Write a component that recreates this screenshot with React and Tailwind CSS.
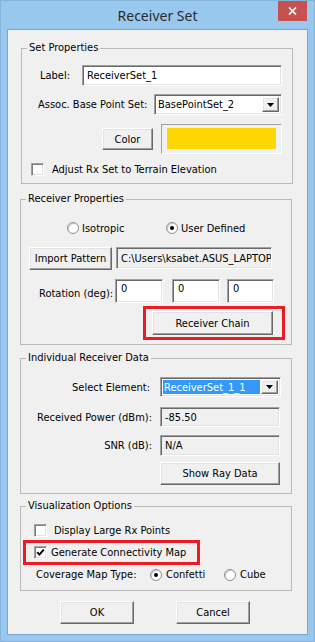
import React from "react";

function Raised({ className = "", children }) {
  return (
    <div
      className={
        "flex items-center justify-center shrink-0 bg-[#f0f0f0] border border-t-white border-l-white border-r-[#696969] border-b-[#696969] shadow-[inset_-1px_-1px_0_#a0a0a0,inset_1px_1px_0_#e3e3e3] " +
        className
      }
    >
      {children}
    </div>
  );
}

function Sunken({ className = "", children }) {
  return (
    <div
      className={
        "flex shrink-0 overflow-hidden whitespace-nowrap border border-t-[#a0a0a0] border-l-[#a0a0a0] border-r-white border-b-white shadow-[inset_1px_1px_0_#696969,inset_-1px_-1px_0_#e3e3e3] " +
        className
      }
    >
      {children}
    </div>
  );
}

function Check({ checked }) {
  return (
    <div className="w-[13px] h-[13px] shrink-0 border border-t-[#a0a0a0] border-l-[#a0a0a0] border-r-white border-b-white shadow-[inset_1px_1px_0_#808080,inset_-1px_-1px_0_#e3e3e3] bg-white flex items-center justify-center">
      {checked && (
        <svg width="9" height="9" viewBox="0 0 9 9">
          <path d="M1.2 4.2 L3.4 6.6 L7.8 1.6" stroke="#000" strokeWidth="1.9" fill="none" />
        </svg>
      )}
    </div>
  );
}

function Radio({ checked }) {
  return (
    <div className="w-[12px] h-[12px] shrink-0 rounded-full border border-[#8f8f8f] bg-white shadow-[inset_1px_1px_1px_#c8c8c8] flex items-center justify-center">
      {checked && <div className="w-[4px] h-[4px] rounded-full bg-black" />}
    </div>
  );
}

function Arrow() {
  return (
    <Raised className="w-[17px] self-stretch">
      <svg width="7" height="4" viewBox="0 0 7 4">
        <path d="M0 0 H7 L3.5 4 Z" fill="#000" />
      </svg>
    </Raised>
  );
}

function Group({ title, className = "", children }) {
  return (
    <div className={"relative flex flex-col shrink-0 w-[272px] border border-[#b9b9b9] " + className}>
      <span className="absolute -top-[8px] left-[5px] px-[2px] bg-[#f0f0f0] leading-[13px]">
        {title}
      </span>
      {children}
    </div>
  );
}

export default function App() {
  return (
    <div className="w-[315px] h-[642px] flex flex-col bg-[#99c8ef] border border-[#86b3dc] font-['DejaVu_Sans_Condensed','DejaVu_Sans',sans-serif] text-[11px] leading-[13px] text-black">
      {/* title bar */}
      <div className="h-[28px] grid grid-cols-[1fr_auto_1fr] shrink-0">
        <div />
        <div className="self-center font-['Noto_Sans',sans-serif] text-[14px] leading-[18px] text-[#2b2b2b] pt-[1px]">
          Receiver Set
        </div>
        <div className="flex justify-end items-start">
          <div className="mr-[7px] w-[29px] h-[20px] bg-[#c75050] flex items-center justify-center">
            <svg width="9" height="8" viewBox="0 0 9 8">
              <path d="M1 0.5 L8 7.5 M8 0.5 L1 7.5" stroke="#fff" strokeWidth="1.7" />
            </svg>
          </div>
        </div>
      </div>

      {/* client */}
      <div className="ml-[6px] w-[301px] h-[606px] shrink-0 border border-[#7ba6cf] bg-[#f0f0f0] flex flex-col">
        {/* Set Properties */}
        <Group title="Set Properties" className="mt-[18px] ml-[13px] h-[136px]">
          <div className="mt-[16px] h-[21px] flex items-center pl-[18px]">
            <span className="w-[42px]">Label:</span>
            <Sunken className="w-[200px] h-[21px] bg-white items-center pl-[4px]">ReceiverSet_1</Sunken>
          </div>
          <div className="mt-[8px] h-[21px] flex items-center pl-[16px]">
            <span className="w-[116px]">Assoc. Base Point Set:</span>
            <Sunken className="w-[128px] h-[21px] bg-white p-[2px]">
              <div className="flex-1 flex items-center pl-[1px]">BasePointSet_2</div>
              <Arrow />
            </Sunken>
          </div>
          <div className="mt-[9px] h-[30px] flex items-center pl-[80px]">
            <Raised className="w-[51px] h-[22px]">Color</Raised>
            <div className="ml-[8px] w-[121px] h-[30px] flex border border-t-[#a0a0a0] border-l-[#a0a0a0] border-r-white border-b-white px-[5px] pt-[3px] pb-[4px]">
              <div className="flex-1 bg-[#ffd700]" />
            </div>
          </div>
          <div className="mt-[9px] h-[13px] flex items-center pl-[9px]">
            <Check />
            <span className="ml-[8px]">Adjust Rx Set to Terrain Elevation</span>
          </div>
        </Group>

        {/* Receiver Properties */}
        <Group title="Receiver Properties" className="mt-[15px] ml-[12px] h-[146px]">
          <div className="mt-[21px] h-[14px] flex items-center pl-[46px]">
            <div className="w-[99px] flex items-center">
              <Radio />
              <span className="ml-[3px]">Isotropic</span>
            </div>
            <div className="flex items-center">
              <Radio checked />
              <span className="ml-[3px]">User Defined</span>
            </div>
          </div>
          <div className="mt-[12px] h-[23px] flex items-start pl-[8px]">
            <Raised className="w-[83px] h-[23px]">Import Pattern</Raised>
            <Sunken className="ml-[4px] w-[156px] h-[22px] bg-[#f0f0f0] items-center pl-[4px]">
              C:\Users\ksabet.ASUS_LAPTOP
            </Sunken>
          </div>
          <div className="mt-[9px] h-[24px] flex items-center pl-[18px]">
            <span className="w-[76px] pt-[4px]">Rotation (deg):</span>
            <Sunken className="w-[48px] h-[24px] bg-white items-start pl-[5px] pt-[2px]">0</Sunken>
            <Sunken className="ml-[9px] w-[48px] h-[24px] bg-white items-start pl-[5px] pt-[2px]">0</Sunken>
            <Sunken className="ml-[7px] w-[47px] h-[24px] bg-white items-start pl-[5px] pt-[2px]">0</Sunken>
          </div>
          <div className="mt-[3px] ml-[122px] w-[142px] h-[34px] border-[3px] border-[#ed1c24] pt-[2px] pl-[6px] flex items-start">
            <Raised className="w-[121px] h-[24px]">Receiver Chain</Raised>
          </div>
        </Group>

        {/* Individual Receiver Data */}
        <Group title="Individual Receiver Data" className="mt-[13px] ml-[12px] h-[136px]">
          <div className="mt-[18px] h-[20px] flex items-center">
            <span className="w-[131px] text-right pr-[2px]">Select Element:</span>
            <Sunken className="ml-[8px] w-[121px] h-[20px] bg-white p-[2px]">
              <div className="flex-1 flex items-center bg-[#3399ff] text-white pl-[1px] mr-[1px]">ReceiverSet_1_1</div>
              <Arrow />
            </Sunken>
          </div>
          <div className="mt-[10px] h-[20px] flex items-center">
            <span className="w-[131px] text-right">Received Power (dBm):</span>
            <Sunken className="ml-[8px] w-[120px] h-[20px] bg-[#f0f0f0] items-center pl-[4px]">-85.50</Sunken>
          </div>
          <div className="mt-[8px] h-[21px] flex items-center">
            <span className="w-[131px] text-right">SNR (dB):</span>
            <Sunken className="ml-[8px] w-[120px] h-[21px] bg-[#f0f0f0] items-center pl-[4px]">N/A</Sunken>
          </div>
          <div className="mt-[6px] flex pl-[139px]">
            <Raised className="w-[120px] h-[23px]">Show Ray Data</Raised>
          </div>
        </Group>

        {/* Visualization Options */}
        <Group title="Visualization Options" className="mt-[12px] ml-[12px] h-[85px]">
          <div className="mt-[17px] h-[13px] flex items-center pl-[13px]">
            <Check />
            <span className="ml-[7px]">Display Large Rx Points</span>
          </div>
          <div className="mt-[3px] ml-[2px] w-[177px] h-[25px] border-[3px] border-[#ed1c24] flex items-center pl-[8px]">
            <Check checked />
            <span className="ml-[4px]">Generate Connectivity Map</span>
          </div>
          <div className="mt-[3px] h-[13px] flex items-center pl-[15px]">
            <span className="w-[114px]">Coverage Map Type:</span>
            <div className="w-[74px] flex items-center">
              <Radio checked />
              <span className="ml-[4px]">Confetti</span>
            </div>
            <div className="flex items-center">
              <Radio />
              <span className="ml-[4px]">Cube</span>
            </div>
          </div>
        </Group>

        <div className="mt-[10px] h-[23px] flex pl-[52px]">
          <Raised className="w-[74px] h-[23px]">OK</Raised>
          <Raised className="ml-[42px] w-[74px] h-[23px]">Cancel</Raised>
        </div>
      </div>
    </div>
  );
}
